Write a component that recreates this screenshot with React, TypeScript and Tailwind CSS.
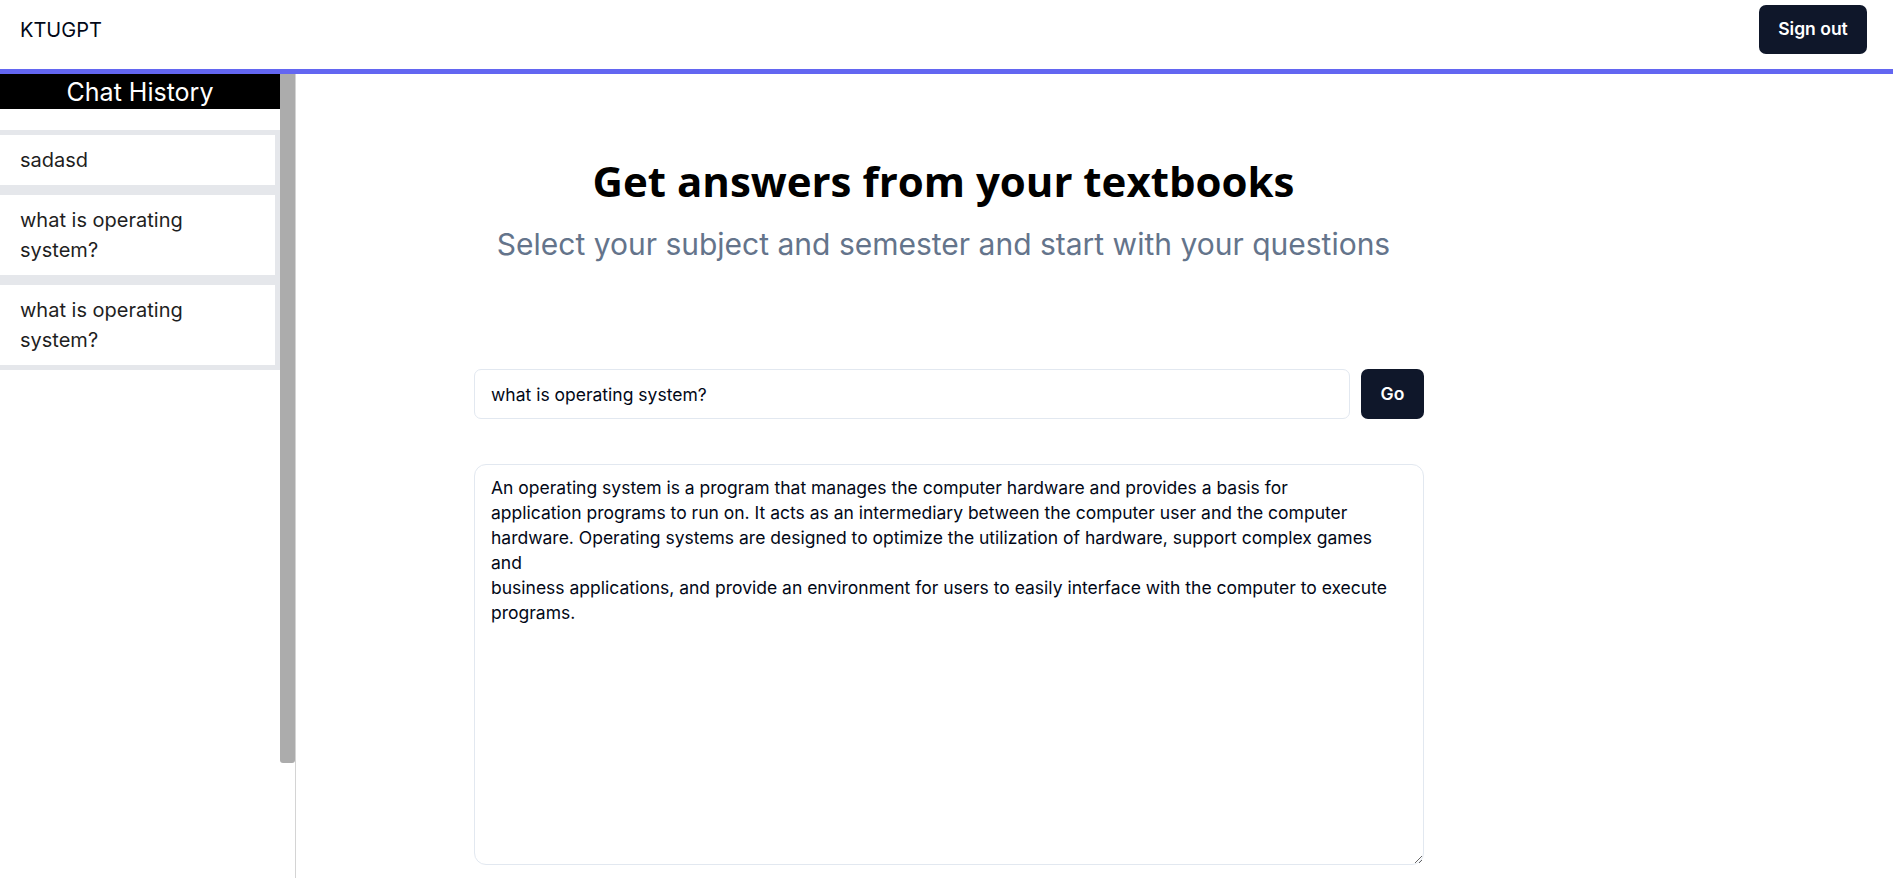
import { useState } from "react";

const answer =
  "An operating system is a program that manages the computer hardware and provides a basis for\n" +
  "application programs to run on. It acts as an intermediary between the computer user and the computer\n" +
  "hardware. Operating systems are designed to optimize the utilization of hardware, support complex games\n" +
  "and\n" +
  "business applications, and provide an environment for users to easily interface with the computer to execute\n" +
  "programs.";

const history = ["sadasd", "what is operating system?", "what is operating system?"];

function Navbar() {
  return (
    <div className="flex h-[69px] items-start justify-between border-b-[5px] border-[#6366f1] box-content">
      <div className="pl-[20px] pt-[15px] text-[20px] leading-[30px] text-[#020817]">KTUGPT</div>
      <button className="mt-[5px] mr-[26px] h-[49px] w-[108px] rounded-[7px] bg-[#0f172a] text-[17.5px] font-semibold text-white">
        Sign out
      </button>
    </div>
  );
}

function Sidebar() {
  return (
    <div className="flex w-[296px] shrink-0 border-r border-[#d4d4d4]">
      <div className="w-[280px]">
        <div className="h-[35px] bg-black text-center text-[25px] leading-[36px] text-white">Chat History</div>
        <div className="mt-[21px] flex flex-col gap-[10px] bg-[#e5e7eb] py-[5px] pr-[5px]">
          {history.map((item, i) => (
            <div key={i} className="bg-white px-[20px] py-[10px] pr-[60px] text-[20px] leading-[30px] text-[#1f1f1f]">
              {item}
            </div>
          ))}
        </div>
      </div>
      <div className="w-[15px]">
        <div className="h-[689px] rounded-b-[3px] bg-[#acacac]"></div>
      </div>
    </div>
  );
}

export default function App() {
  const [question, setQuestion] = useState("what is operating system?");

  return (
    <div className="flex h-[878px] flex-col overflow-hidden bg-white font-['Inter',sans-serif]">
      <Navbar />
      <div className="flex flex-1">
        <Sidebar />
        <div className="flex-1">
          <div className="ml-[178px] w-[950px] pt-[82px]">
            <div className="pr-[11px] text-center">
              <h1 className="font-['Open_Sans',sans-serif] text-[42px] font-bold leading-[50px] text-black">
                Get answers from your textbooks
              </h1>
              <p className="mt-[18px] text-[30px] leading-[40px] text-[#64748b]">
                Select your subject and semester and start with your questions
              </p>
            </div>
            <div className="mt-[105px] flex gap-[11px]">
              <input
                value={question}
                onChange={(e) => setQuestion(e.target.value)}
                className="h-[50px] flex-1 rounded-[7px] border border-[#e2e8f0] px-[16px] text-[17.5px] text-[#020817] outline-none"
              />
              <button className="h-[50px] w-[63px] rounded-[7px] bg-[#0f172a] text-[17.5px] font-semibold text-white">
                Go
              </button>
            </div>
            <textarea
              readOnly
              value={answer}
              className="mt-[45px] block h-[401px] w-full rounded-[12px] border border-[#e2e8f0] px-[16px] py-[10px] text-[17.5px] leading-[25px] text-[#020817] outline-none"
            />
          </div>
        </div>
      </div>
    </div>
  );
}
